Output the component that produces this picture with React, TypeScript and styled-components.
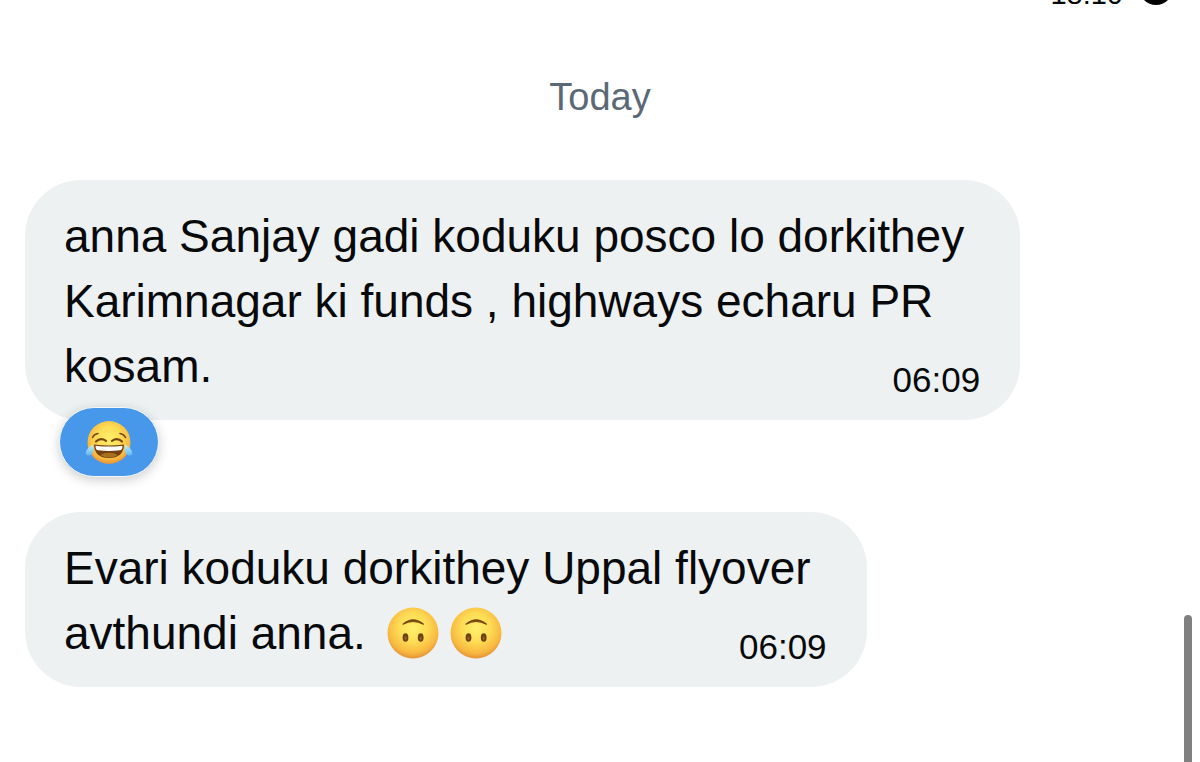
import React from "react";
import styled, { createGlobalStyle } from "styled-components";

const GlobalStyle = createGlobalStyle`
  * { box-sizing: border-box; }
  body {
    margin: 0;
    background: #ffffff;
    color: #08090a;
    font-family: "Liberation Sans", Arial, sans-serif;
    overflow: hidden;
  }
`;

const Conversation = styled.main`
  display: flex;
  flex-direction: column;
  min-height: 100vh;
`;

const SentStatus = styled.header`
  display: flex;
  justify-content: flex-end;
  align-items: flex-end;
  gap: 16px;
  height: 8px;
  padding-right: 27px;
  font-size: 29px;
  line-height: 28px;
`;

const SentIcon = styled.svg`
  display: block;
  flex: none;
  width: 34px;
  height: 34px;
  margin-bottom: 3px;
`;

const DayLabel = styled.h2`
  margin: 64px 0 58px;
  color: #5b6876;
  font-size: 38px;
  font-weight: 400;
  line-height: 50px;
  text-align: center;
`;

const MessageList = styled.ol`
  display: flex;
  flex-direction: column;
  align-items: flex-start;
  gap: 35px;
  margin: 0;
  padding: 0 25px;
  list-style: none;
`;

const Message = styled.li`
  display: flex;
  flex-direction: column;
  align-items: flex-start;
`;

const Bubble = styled.article`
  display: grid;
  padding: 24px 40px 21px 39px;
  border-radius: 56px;
  background: #edf1f2;
`;

const MessageText = styled.p`
  grid-area: 1 / 1;
  margin: 0;
  padding-right: 16px;
  font-size: 46px;
  line-height: 65px;
`;

const Time = styled.time`
  grid-area: 1 / 1;
  align-self: end;
  justify-self: end;
  font-size: 35px;
  line-height: 38px;
`;

const Reaction = styled.button`
  display: flex;
  align-items: center;
  justify-content: center;
  width: 100px;
  height: 70px;
  margin: -13px 0 0 34px;
  padding: 0;
  border: 1px solid #f3f7fa;
  border-radius: 35px;
  background: #4797ea;
  box-shadow: 0 3px 12px rgba(0, 0, 0, 0.2);
`;

const Emoji = styled.svg<{ $size: number }>`
  width: ${(p) => p.$size}px;
  height: ${(p) => p.$size}px;
  overflow: visible;
`;

const InlineEmojis = styled.span`
  display: inline-flex;
  gap: 11px;
  margin-left: 8px;
  vertical-align: -10px;
`;

const ScrollThumb = styled.div`
  position: fixed;
  right: 8px;
  bottom: 0;
  width: 8px;
  height: 147px;
  border-radius: 4px 4px 0 0;
  background: #808080;
`;

const Definitions = styled.svg`
  position: absolute;
`;

const FaceGradients = () => (
  <Definitions width="0" height="0" aria-hidden="true">
    <defs>
      <radialGradient id="face" cx="0.5" cy="0.4" r="0.62">
        <stop offset="0" stopColor="#fff06c" />
        <stop offset="0.45" stopColor="#fedc55" />
        <stop offset="0.8" stopColor="#f8b840" />
        <stop offset="1" stopColor="#e08a34" />
      </radialGradient>
      <linearGradient id="tear" x1="0" y1="0" x2="0" y2="1">
        <stop offset="0" stopColor="#c9effc" />
        <stop offset="1" stopColor="#5bb8ee" />
      </linearGradient>
    </defs>
  </Definitions>
);

const UpsideDownFace = () => (
  <Emoji $size={52} viewBox="0 0 52 52" role="img" aria-label="upside-down face">
    <circle cx="26" cy="26" r="25.5" fill="url(#face)" />
    <path d="M16 17.2Q26 8.500 36.500 17.200Q26 11.500 16 17.200Z" fill="#7a4a10" stroke="#7a4a10" strokeWidth="1.200" strokeLinejoin="round" />
    <ellipse cx="18.500" cy="30.500" rx="2.900" ry="4.300" fill="#704210" />
    <ellipse cx="33.700" cy="30.500" rx="2.900" ry="4.300" fill="#704210" />
    <ellipse cx="18.500" cy="31.200" rx="1" ry="1.800" fill="#94602a" />
    <ellipse cx="33.700" cy="31.200" rx="1" ry="1.800" fill="#94602a" />
  </Emoji>
);

const JoyFace = () => (
  <Emoji $size={46} viewBox="0 0 46 46" role="img" aria-label="face with tears of joy">
    <circle cx="23" cy="23.500" r="21.500" fill="url(#face)" />
    <g fill="none" stroke="#75450f" strokeLinecap="round">
      <path d="M6.500 18.500Q8.500 14.800 12 14.500" strokeWidth="1.500" />
      <path d="M39.500 18.500Q37.500 14.800 34 14.500" strokeWidth="1.500" />
      <path d="M10 22.500Q14.500 18.200 20 21.800" strokeWidth="2.200" />
      <path d="M36 22.500Q31.500 18.200 26 21.800" strokeWidth="2.200" />
    </g>
    <path d="M8 25.500Q23 27.500 38 25.500Q37.500 39 23 39Q8.500 39 8 25.500Z" fill="#75400f" />
    <path d="M9.500 26.700Q23 28.500 36.500 26.700Q36.500 31 34 31.300Q23 32.500 12 31.300Q9.500 31 9.500 26.700Z" fill="#fff" />
    <path d="M14 36Q23 31.500 32 36Q23 41 14 36Z" fill="#a8701f" />
    <path d="M6.800 25.500Q9 35.500 3.500 36.500Q-1.500 37 .2 32Q2 28.500 6.800 25.500Z" fill="url(#tear)" />
    <path d="M39.200 25.500Q37 35.500 42.500 36.500Q47.500 37 45.800 32Q44 28.500 39.200 25.500Z" fill="url(#tear)" />
  </Emoji>
);

export default function App() {
  return (
    <Conversation>
      <GlobalStyle />
      <FaceGradients />
      <SentStatus>
        <time>18:10</time>
        <SentIcon viewBox="0 0 34 34" role="img" aria-label="Sent">
          <circle cx="17" cy="17" r="17" fill="#000" />
          <path d="M9 16l6 6 10-11" fill="none" stroke="#fff" strokeWidth="3" />
        </SentIcon>
      </SentStatus>
      <DayLabel>Today</DayLabel>
      <MessageList>
        <Message>
          <Bubble>
            <MessageText>
              anna Sanjay gadi koduku posco lo dorkithey
              <br />
              Karimnagar ki funds , highways echaru PR
              <br />
              kosam.
            </MessageText>
            <Time>06:09</Time>
          </Bubble>
          <Reaction type="button" aria-label="Reaction: face with tears of joy">
            <JoyFace />
          </Reaction>
        </Message>
        <Message>
          <Bubble>
            <MessageText>
              Evari koduku dorkithey Uppal flyover
              <br />
              avthundi anna.{" "}
              <InlineEmojis>
                <UpsideDownFace />
                <UpsideDownFace />
              </InlineEmojis>
            </MessageText>
            <Time>06:09</Time>
          </Bubble>
        </Message>
      </MessageList>
      <ScrollThumb />
    </Conversation>
  );
}
